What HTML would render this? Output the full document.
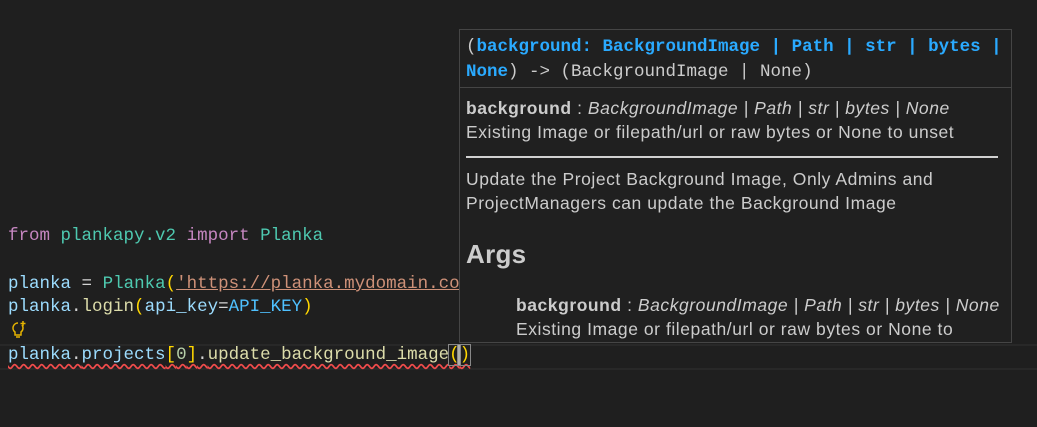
<!DOCTYPE html>
<html><head><style>
html,body{margin:0;padding:0;}
body{width:1037px;height:427px;background:#1f1f1f;position:relative;overflow:hidden;font-family:"Liberation Mono",monospace;}
.code{position:absolute;left:8px;font-size:17.5px;white-space:pre;line-height:24px;}
.kw{color:#c586c0}.cls{color:#4ec9b0}.var{color:#9cdcfe}.fn{color:#dcdcaa}.str{color:#ce9178}.p{color:#ffd700}.c{color:#4fc1ff}.o{color:#d4d4d4}.num{color:#b5cea8}
.cur{position:absolute;left:0;top:344px;width:1037px;height:22px;border-top:2px solid #282828;border-bottom:2px solid #282828;}
.hover{position:absolute;left:459px;top:29px;width:551px;height:312px;background:#202020;border:1px solid #454545;overflow:hidden;color:#cccccc;}
.hd{font-family:"Liberation Mono",monospace;font-size:17.5px;line-height:25px;padding:5px 6px 3px 6px;height:49px;border-bottom:1px solid #454545;white-space:pre;}
.b{color:#2aaaff;font-weight:bold}
.bd{font-family:"Liberation Sans",sans-serif;font-size:17.5px;letter-spacing:0.55px;line-height:24px;padding:0 6px;white-space:nowrap;}
i{font-style:italic}
</style></head><body>
<div class="cur"></div>
<div class="code" style="top:224px"><span class="kw">from</span> <span class="cls">plankapy.v2</span> <span class="kw">import</span> <span class="cls">Planka</span></div>
<div class="code" style="top:272px"><span class="var">planka</span> <span class="o">=</span> <span class="cls">Planka</span><span class="p">(</span><span class="str" style="text-decoration:underline">'https://planka.mydomain.co</span></div>
<div class="code" style="top:295px"><span class="var">planka</span><span class="o">.</span><span class="fn">login</span><span class="p">(</span><span class="var">api_key</span><span class="o">=</span><span class="c">API_KEY</span><span class="p">)</span></div>
<svg style="position:absolute;left:10px;top:320px" width="18" height="20" viewBox="0 0 18 20"><path d="M8 3a5 5 0 0 0-3 9v3h6v-3a5 5 0 0 0 1-7" fill="none" stroke="#e6b400" stroke-width="1.5"/><path d="M6 17h4" stroke="#e6b400" stroke-width="1.5"/><path d="M13 1v5M10.5 3.5h5" stroke="#e6b400" stroke-width="1.5"/></svg>
<div class="code" style="top:343px;text-decoration:underline wavy #f14c4c;text-underline-offset:4px"><span class="var">planka</span><span class="o">.</span><span class="var">projects</span><span class="p">[</span><span class="num">0</span><span class="p">]</span><span class="o">.</span><span class="fn">update_background_image</span><span class="p" style="outline:1px solid #888">(</span><span class="p" style="outline:1px solid #888;border-left:2px solid #aeafad;margin-left:-2px">)</span></div>
<div class="hover">
<div class="hd">(<span class="b">background: BackgroundImage | Path | str | bytes |</span>
<span class="b">None</span>) -&gt; (BackgroundImage | None)</div>
<div class="bd" style="padding-top:8px"><b>background</b> : <i>BackgroundImage | Path | str | bytes | None</i><br>Existing Image or filepath/url or raw bytes or None to unset</div>
<div style="margin:12px 13px 0 6px;height:2px;background:#d0d0d0"></div>
<div class="bd" style="padding-top:9px">Update the Project Background Image, Only Admins and<br>ProjectManagers can update the Background Image</div>
<div class="bd" style="font-size:26px;letter-spacing:0.3px;font-weight:bold;line-height:30px;padding-top:24px">Args</div>
<div class="bd" style="padding-left:56px;padding-top:24px"><b>background</b> : <i>BackgroundImage | Path | str | bytes | None</i><br>Existing Image or filepath/url or raw bytes or None to</div>
</div>
</body></html>
